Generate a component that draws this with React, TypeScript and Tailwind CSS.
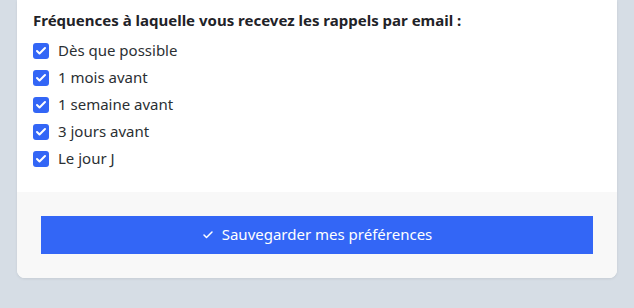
import { Check } from 'lucide-react';

const options = ['Dès que possible', '1 mois avant', '1 semaine avant', '3 jours avant', 'Le jour J'];

export default function App() {
  return (
    <div className="min-h-[308px] bg-[#d6dde5] px-[17px] pb-[30px] font-['Noto_Sans',sans-serif]">
      <div className="w-[600px] overflow-hidden rounded-b-lg bg-white shadow-[0_1px_3px_rgba(0,0,0,0.08)]">
        {/* Reminder frequencies */}
        <div className="px-4 pt-[9px] pb-[22px]">
          <p className="text-[15px] font-bold text-[#1f2328]">Fréquences à laquelle vous recevez les rappels par email :</p>
          <div className="mt-[8px] flex flex-col gap-[5px]">
            {options.map((label) => (
              <label key={label} className="flex h-[22px] items-center gap-[9px] text-[15px] text-[#2b2f33]">
                <span className="flex h-4 w-4 items-center justify-center rounded-[3px] bg-[#3366f6]">
                  <Check className="h-3 w-3 text-white" strokeWidth={4} />
                </span>
                {label}
              </label>
            ))}
          </div>
        </div>

        {/* Save */}
        <div className="bg-[#f8f8f8] px-6 py-6">
          <button className="flex h-[38px] w-full items-center justify-center gap-2 bg-[#3366f6] text-[15px] text-white">
            <Check className="h-3 w-3" strokeWidth={3} />
            Sauvegarder mes préférences
          </button>
        </div>
      </div>
    </div>
  );
}
